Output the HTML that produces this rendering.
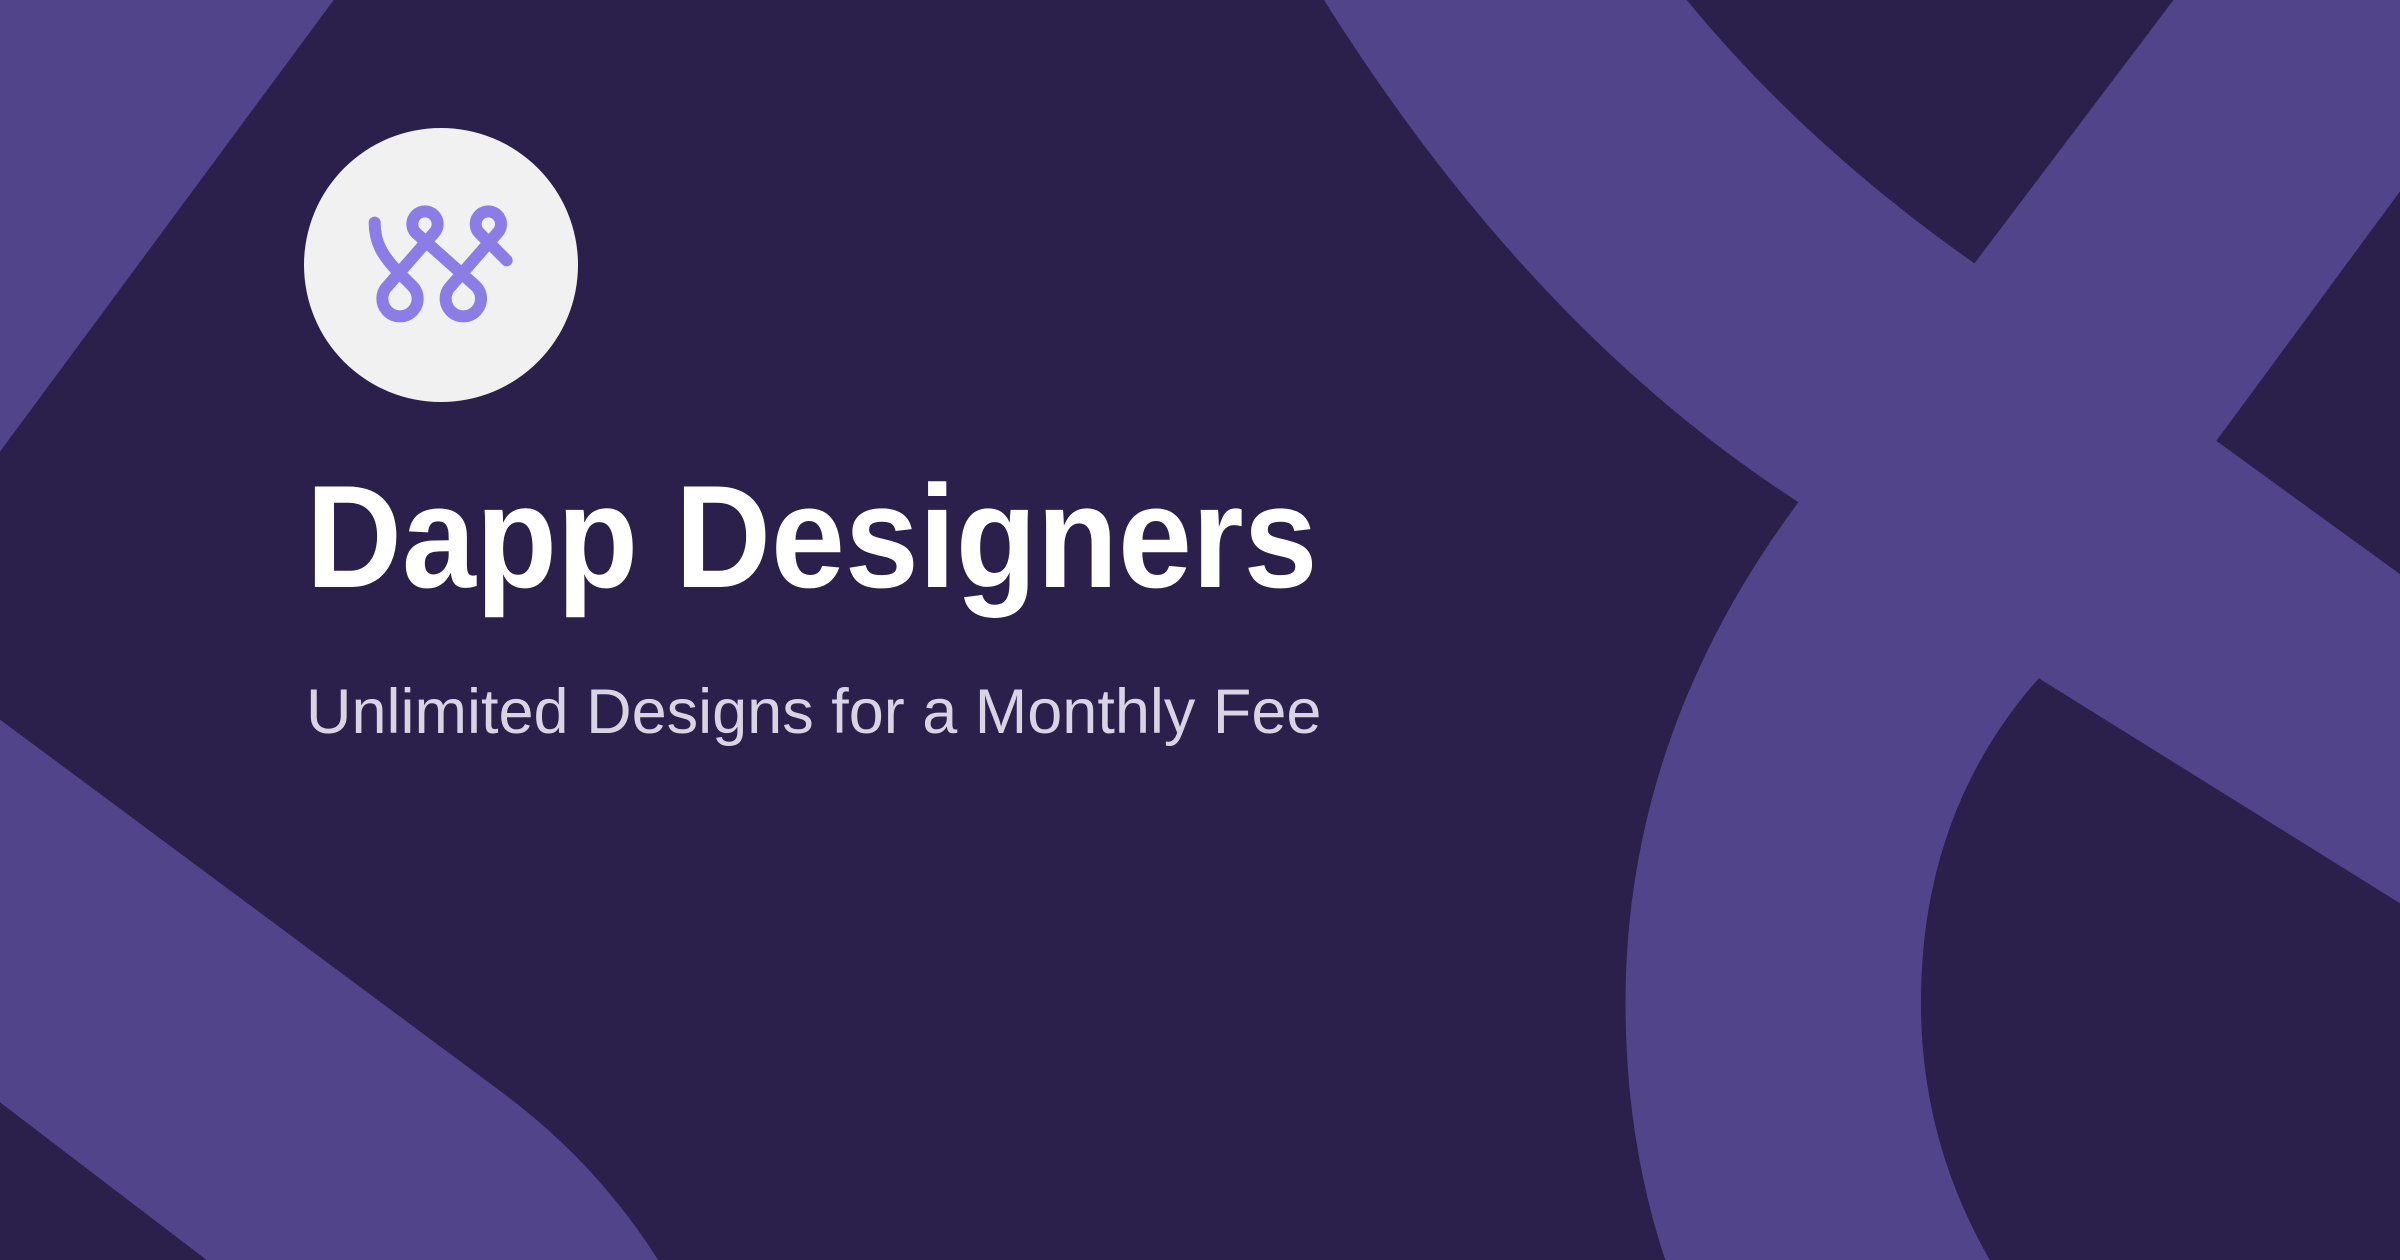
<!DOCTYPE html>
<html><head><meta charset="utf-8"><style>
html,body{margin:0;padding:0;}
body{width:2400px;height:1260px;overflow:hidden;background:#2b1f4b;position:relative;font-family:"Liberation Sans",sans-serif;}
svg.bg{position:absolute;left:0;top:0;}
.circle{position:absolute;left:304px;top:128px;width:274px;height:274px;border-radius:50%;background:#f1f1f1;}
.icon{position:absolute;left:300px;top:120px;}
.title{position:absolute;left:306px;top:452px;font-size:146px;font-weight:bold;color:#fff;white-space:nowrap;line-height:170px;transform:scaleX(0.91);transform-origin:left top;}
.sub{position:absolute;left:306px;top:672px;font-size:63px;color:#d9d4e3;white-space:nowrap;line-height:80px;}
</style></head><body>
<svg class="bg" width="2400" height="1260" viewBox="0 0 1568 823" preserveAspectRatio="none">
<g fill="#52448a">
<path d="M0,0 L218,0 L0,295 Z"/>
<path d="M0,470 L330,715 Q390,760 430,823 L135,823 L0,720 Z"/>
<path d="M865,0 L1102,0 Q1180,95 1290,172 L1420,0 L1568,0 L1568,125 L1448,288 L1568,375 L1568,590 L1332,443 Q1255,530 1255,655 Q1255,745 1300,823 L1088,823 Q1062,745 1062,655 Q1062,480 1175,328 Q1000,215 865,0 Z"/>
</g>
</svg>
<div class="circle"></div>
<svg class="icon" width="290" height="290" viewBox="0 0 870 870">
<path d="M224,308 C224,368 248,405 285,446 L337,498 A53,53 0 1 1 263,498 L402,339 A38,38 0 1 0 348,339 L527,498 A53,53 0 1 1 453,498 L592,339 A38,38 0 1 0 538,339 L620,421" fill="none" stroke="#8b7ce6" stroke-width="36" stroke-linecap="round" stroke-linejoin="round"/>
</svg>
<div class="title">Dapp Designers</div>
<div class="sub">Unlimited Designs for a Monthly Fee</div>
</body></html>
